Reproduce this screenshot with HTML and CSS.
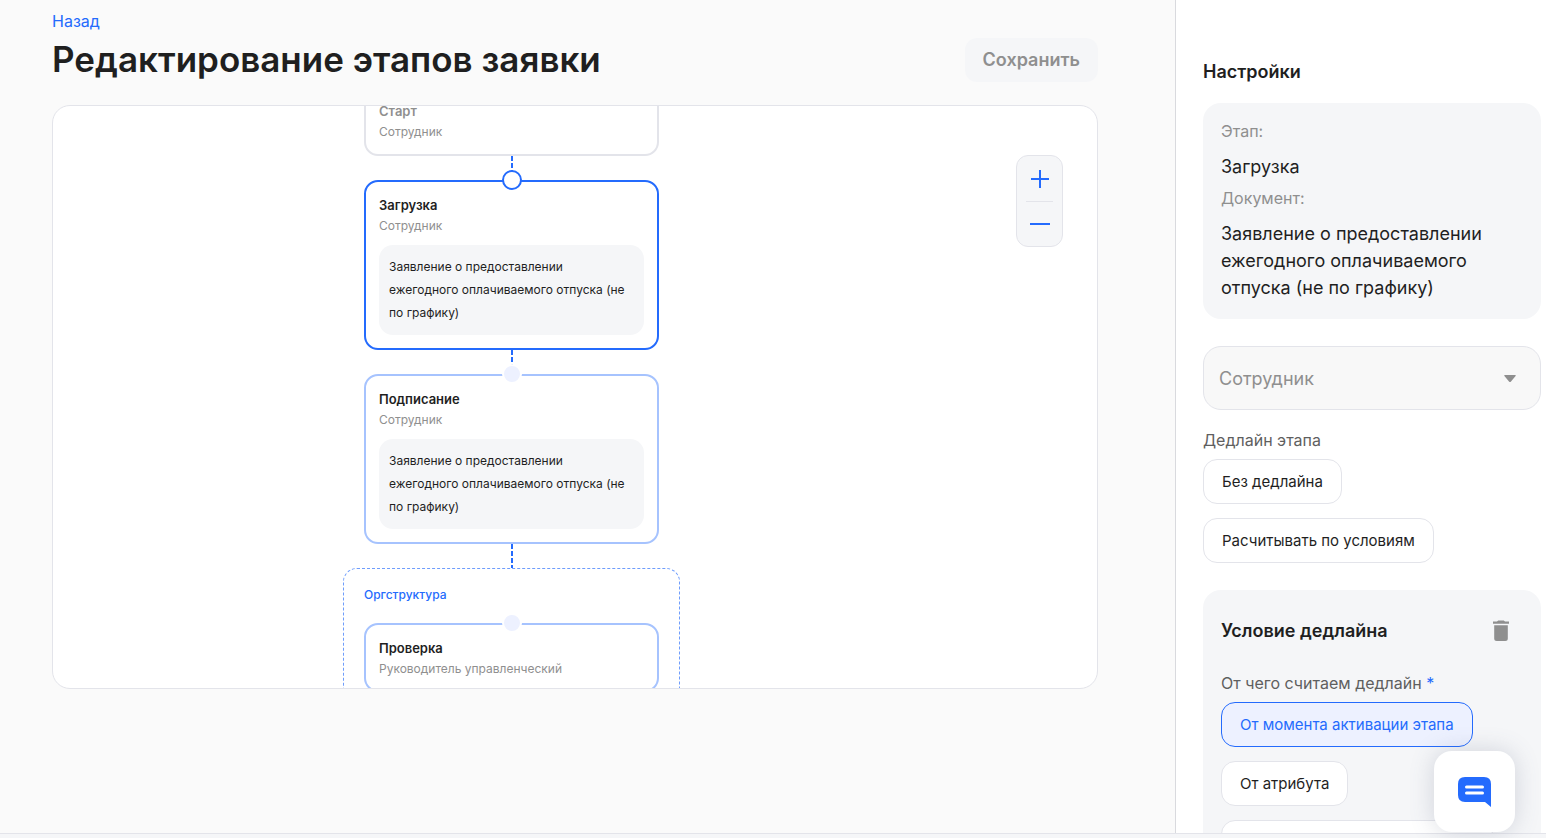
FILE: index.html
```html
<!DOCTYPE html>
<html lang="ru">
<head>
    <meta charset="UTF-8">
    <meta name="viewport" content="width=device-width, initial-scale=1.0">
    <title>Редактирование этапов заявки</title>
    <link rel="stylesheet" href="styles.css">
</head>
<body>
    <div class="layout">
        <main class="main">
            <a class="back" href="#">Назад</a>
            <div class="header">
                <h1>Редактирование этапов заявки</h1>
                <button class="save" type="button" disabled>Сохранить</button>
            </div>

            <div class="canvas">
                <div class="flow">
                    <div class="node node-start">
                        <h3>Старт</h3>
                        <p>Сотрудник</p>
                    </div>
                    <div class="connector"></div>
                    <div class="node node-active">
                        <span class="port"></span>
                        <h3>Загрузка</h3>
                        <p>Сотрудник</p>
                        <div class="doc">Заявление о предоставлении ежегодного оплачиваемого отпуска (не по графику)</div>
                    </div>
                    <div class="connector"></div>
                    <div class="node">
                        <span class="port"></span>
                        <h3>Подписание</h3>
                        <p>Сотрудник</p>
                        <div class="doc">Заявление о предоставлении ежегодного оплачиваемого отпуска (не по графику)</div>
                    </div>
                    <div class="connector"></div>
                    <div class="group">
                        <div class="group-name">Оргструктура</div>
                        <div class="node">
                            <span class="port"></span>
                            <h3>Проверка</h3>
                            <p>Руководитель управленческий</p>
                        </div>
                    </div>
                </div>

                <div class="zoom">
                    <button type="button" aria-label="Увеличить">
                        <svg width="20" height="20" viewBox="0 0 20 20"><path d="M10 1v18M1 10h18"/></svg>
                    </button>
                    <button type="button" aria-label="Уменьшить">
                        <svg width="20" height="20" viewBox="0 0 20 20"><path d="M0 10h20"/></svg>
                    </button>
                </div>
            </div>
        </main>

        <aside class="settings">
            <h2>Настройки</h2>
            <dl class="panel info">
                <dt>Этап:</dt>
                <dd>Загрузка</dd>
                <dt>Документ:</dt>
                <dd>Заявление о предоставлении ежегодного оплачиваемого отпуска (не по графику)</dd>
            </dl>

            <div class="select">
                <select aria-label="Участник" disabled>
                    <option>Сотрудник</option>
                </select>
                <svg width="12" height="8" viewBox="0 0 12 8"><path d="M1 0h10q1.500 0 .6 1L7 6.500q-1 1-2 0L.4 1Q-.5 0 1 0z"/></svg>
            </div>

            <div class="label" id="deadline">Дедлайн этапа</div>
            <div class="options" role="group" aria-labelledby="deadline">
                <button class="option" type="button">Без дедлайна</button>
                <button class="option" type="button">Расчитывать по условиям</button>
            </div>

            <section class="panel condition">
                <div class="condition-header">
                    <h2>Условие дедлайна</h2>
                    <button class="delete" type="button" aria-label="Удалить">
                        <svg width="16" height="22" viewBox="0 0 16 22"><path d="M0 1.500h4L5.200.5h5.600L12 1.500h4v2.300H0zM1.200 5.200h13.600v13.300q0 2.500-2.500 2.500H3.700q-2.500 0-2.500-2.500z"/></svg>
                    </button>
                </div>
                <div class="label" id="from">От чего считаем дедлайн <span class="required">*</span></div>
                <div class="options" role="group" aria-labelledby="from">
                    <button class="option selected" type="button">От момента активации этапа</button>
                    <button class="option" type="button">От атрибута</button>
                    <button class="option option-wide" type="button" aria-label="Другое"></button>
                </div>
            </section>
        </aside>
    </div>
    <footer class="bottom-bar"></footer>

    <button class="chat" type="button" aria-label="Чат">
        <svg width="33" height="30" viewBox="0 0 33 30">
            <path d="M7 0h19q7 0 7 7v23l-6-5H7q-7 0-7-7V7q0-7 7-7z" fill="#246bfd"/>
            <path d="M8.500 10h16M8.500 16h16" stroke="#fff" stroke-width="3" stroke-linecap="round"/>
        </svg>
    </button>
</body>
</html>
```

FILE: styles.css
```css
* {
    box-sizing: border-box;
    margin: 0;
    padding: 0;
}

body {
    display: flex;
    flex-direction: column;
    height: 100vh;
    overflow: hidden;
    font-family: Inter, 'Liberation Sans', sans-serif;
    color: #1f1f1f;
    background: #fafafa;
}

button,
select {
    font-family: inherit;
    border: none;
    cursor: pointer;
}

.layout {
    display: flex;
    flex: 1;
    min-height: 0;
}

/* Main column */
.main {
    display: flex;
    flex-direction: column;
    flex: 1;
    min-width: 0;
    padding: 9px 77px 144px 52px;
}

.back {
    align-self: flex-start;
    font-size: 16px;
    line-height: 24px;
    color: #246bfd;
    text-decoration: none;
}

.header {
    display: flex;
    justify-content: space-between;
    align-items: center;
    margin: 4px 0 23px;
}

h1 {
    font-size: 35px;
    line-height: 45px;
    font-weight: 600;
}

.save {
    padding: 0 18px;
    font-size: 18px;
    line-height: 44px;
    font-weight: 600;
    color: #8f8f8f;
    background: #f5f6f8;
    border-radius: 12px;
}

.canvas {
    position: relative;
    flex: 1;
    min-height: 0;
    overflow: hidden;
    background: #fff;
    border: 1px solid #e3e4ea;
    border-radius: 18px;
}

/* Stage diagram */
.flow {
    position: absolute;
    top: -20px;
    left: 290px;
    display: flex;
    flex-direction: column;
    align-items: center;
    width: 337px;
}

.node {
    position: relative;
    width: 295px;
    padding: 13px 13px 11px;
    background: #fff;
    border: 2px solid #a6c3fe;
    border-radius: 14px;
}

.node-start {
    padding-bottom: 12px;
    border-color: #e3e4ea;
}

.node-active {
    border-color: #246bfd;
}

.node h3 {
    margin-bottom: 1px;
    font-size: 13px;
    line-height: 20px;
    font-weight: 600;
}

.node-start h3 {
    color: #8f8f8f;
}

.node p {
    font-size: 12px;
    line-height: 20px;
    color: #8f8f8f;
}

.doc {
    margin: 9px 0 2px;
    padding: 10px 10px 11px;
    font-size: 12px;
    line-height: 23px;
    background: #f5f6f8;
    border-radius: 14px;
}

.port {
    position: absolute;
    top: -12px;
    left: 50%;
    width: 20px;
    height: 20px;
    margin-left: -10px;
    background: #edf1ff;
    border: 2px solid #fff;
    border-radius: 50%;
}

.node-active .port {
    background: #fff;
    border-color: #246bfd;
}

.connector {
    width: 2px;
    height: 24px;
    background: repeating-linear-gradient(#246bfd 0 5px, transparent 5px 7px);
}

.group {
    width: 100%;
    padding: 16px 20px;
    border: 1px dashed #6f9dfc;
    border-radius: 14px;
}

.group-name {
    margin-bottom: 18px;
    font-size: 12px;
    line-height: 20px;
    font-weight: 500;
    color: #246bfd;
}

.zoom {
    position: absolute;
    top: 49px;
    right: 34px;
    width: 47px;
    padding: 0 9px;
    background: #f5f6f8;
    border: 1px solid #e3e4ea;
    border-radius: 12px;
}

.zoom button {
    display: flex;
    justify-content: center;
    align-items: center;
    width: 100%;
    height: 45px;
    background: none;
}

.zoom button + button {
    border-top: 1px solid #e3e4ea;
}

.zoom path {
    stroke: #246bfd;
    stroke-width: 2;
}

/* Settings column */
.settings {
    width: 371px;
    padding: 60px 5px 0 27px;
    overflow: hidden;
    background: #fff;
    border-left: 1px solid #d9dade;
}

h2 {
    font-size: 18px;
    line-height: 24px;
    font-weight: 600;
}

.panel {
    padding: 18px;
    background: #f5f6f8;
    border-radius: 18px;
}

.info {
    margin: 19px 0 27px;
    padding-top: 16px;
}

.info dt {
    font-size: 16px;
    line-height: 24px;
    color: #8f8f8f;
}

.info dd {
    padding: 10px 0 6px;
    font-size: 18px;
    line-height: 27px;
}

.info dd:last-child {
    padding-bottom: 0;
}

.select {
    position: relative;
    margin-bottom: 18px;
}

.select select {
    display: block;
    width: 100%;
    height: 64px;
    padding: 0 15px;
    font-size: 18px;
    color: #8f8f8f;
    background: #f8f8f8;
    border: 1px solid #e3e4ea;
    border-radius: 18px;
    appearance: none;
    opacity: 1;
}

.select svg {
    position: absolute;
    top: 29px;
    right: 25px;
    fill: #8f8f8f;
    pointer-events: none;
}

.label {
    margin-bottom: 7px;
    font-size: 16px;
    line-height: 24px;
    color: #5f5f5f;
}

.required {
    color: #246bfd;
}

.options {
    display: flex;
    flex-direction: column;
    align-items: flex-start;
    gap: 14px;
}

.option {
    padding: 0 18px;
    height: 45px;
    font-size: 15px;
    white-space: nowrap;
    color: #1f1f1f;
    background: #fff;
    border: 1px solid #e3e4ea;
    border-radius: 14px;
}

.option.selected {
    color: #246bfd;
    background: #edf1ff;
    border-color: #246bfd;
}

.option-wide {
    width: 90%;
}

.condition {
    margin-top: 27px;
}

.condition-header {
    display: flex;
    justify-content: space-between;
    align-items: center;
    margin: 11px 14px 28px 0;
}

.delete {
    display: flex;
    background: none;
}

.delete path {
    fill: #8f8f8f;
}

.bottom-bar {
    height: 5px;
    background: #f5f6f8;
    border-top: 1px solid #e3e4ea;
}

.chat {
    position: fixed;
    right: 31px;
    bottom: 6px;
    display: flex;
    justify-content: center;
    align-items: center;
    width: 81px;
    height: 81px;
    background: #fff;
    border-radius: 18px;
    box-shadow: 0 0 24px rgba(80, 90, 120, 0.22);
}
```
